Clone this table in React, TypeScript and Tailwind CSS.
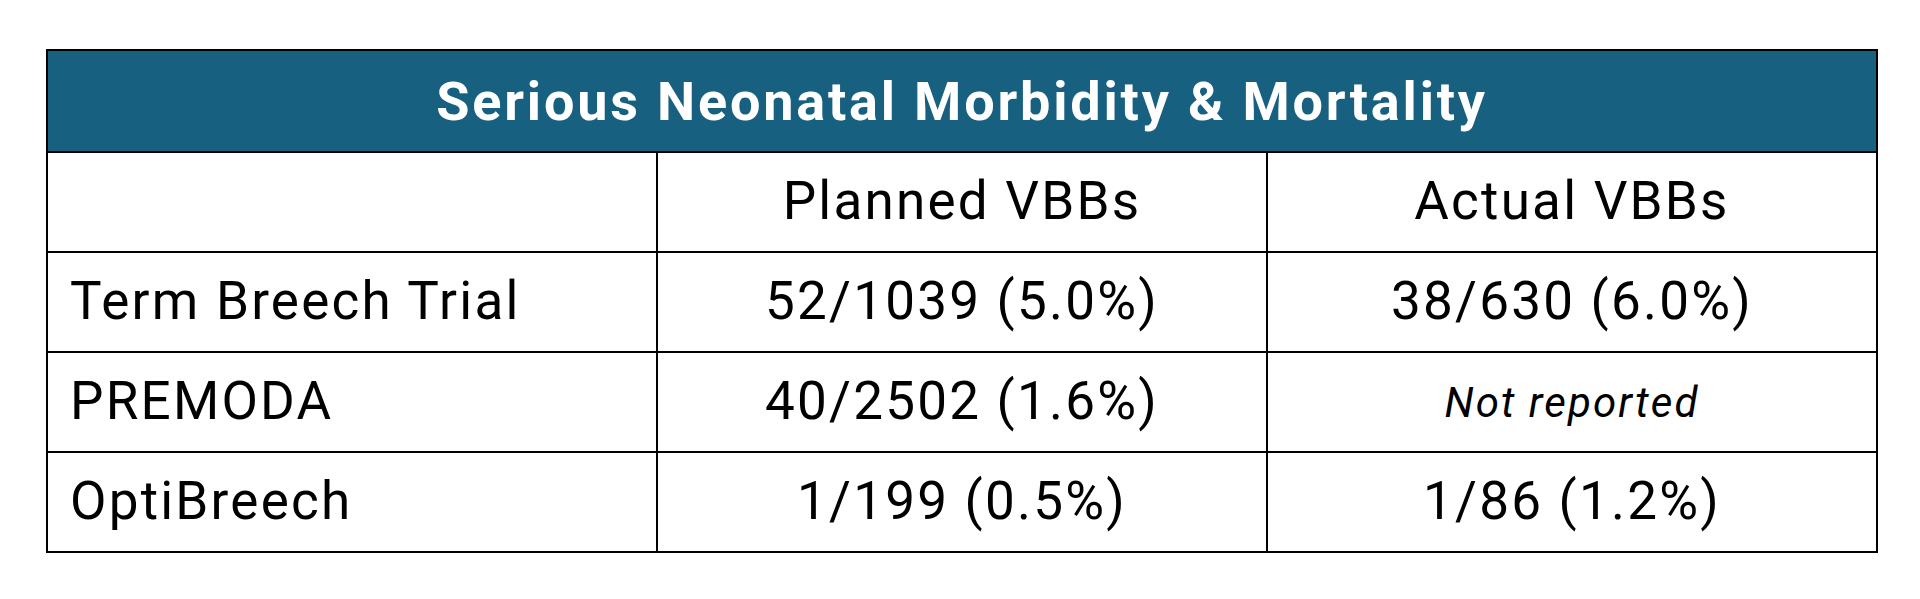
export default function App() {
	const rows = [
		{ name: "Term Breech Trial", planned: "52/1039 (5.0%)", actual: "38/630 (6.0%)" },
		{ name: "PREMODA", planned: "40/2502 (1.6%)", actual: null },
		{ name: "OptiBreech", planned: "1/199 (0.5%)", actual: "1/86 (1.2%)" },
	];

	return (
		<div className="w-[1920px] h-[599px] bg-white pt-[49px] pl-[46px] font-['Roboto',sans-serif] text-black">
			{/* table */}
			<div className="grid grid-cols-3 w-[1832px] gap-[2px] p-[2px] bg-black text-[53px] tracking-[0.042em]">
				<div className="col-span-3 h-[100px] flex items-center justify-center bg-[#17607f] text-white text-[54px] font-bold tracking-[0.052em]">
					Serious Neonatal Morbidity &amp; Mortality
				</div>
				<div className="h-[98px] bg-white" />
				<div className="h-[98px] bg-white flex items-center justify-center">
					Planned VBBs
				</div>
				<div className="h-[98px] bg-white flex items-center justify-center">
					Actual VBBs
				</div>
				{rows.map((row) => (
					<>
						<div key={row.name} className="h-[98px] bg-white flex items-center pl-[22px]">
							{row.name}
						</div>
						<div className="h-[98px] bg-white flex items-center justify-center">
							{row.planned}
						</div>
						<div className="h-[98px] bg-white flex items-center justify-center">
							{row.actual ?? (
								<span className="italic text-[42px] tracking-[0.05em]">Not reported</span>
							)}
						</div>
					</>
				))}
			</div>
		</div>
	);
}
